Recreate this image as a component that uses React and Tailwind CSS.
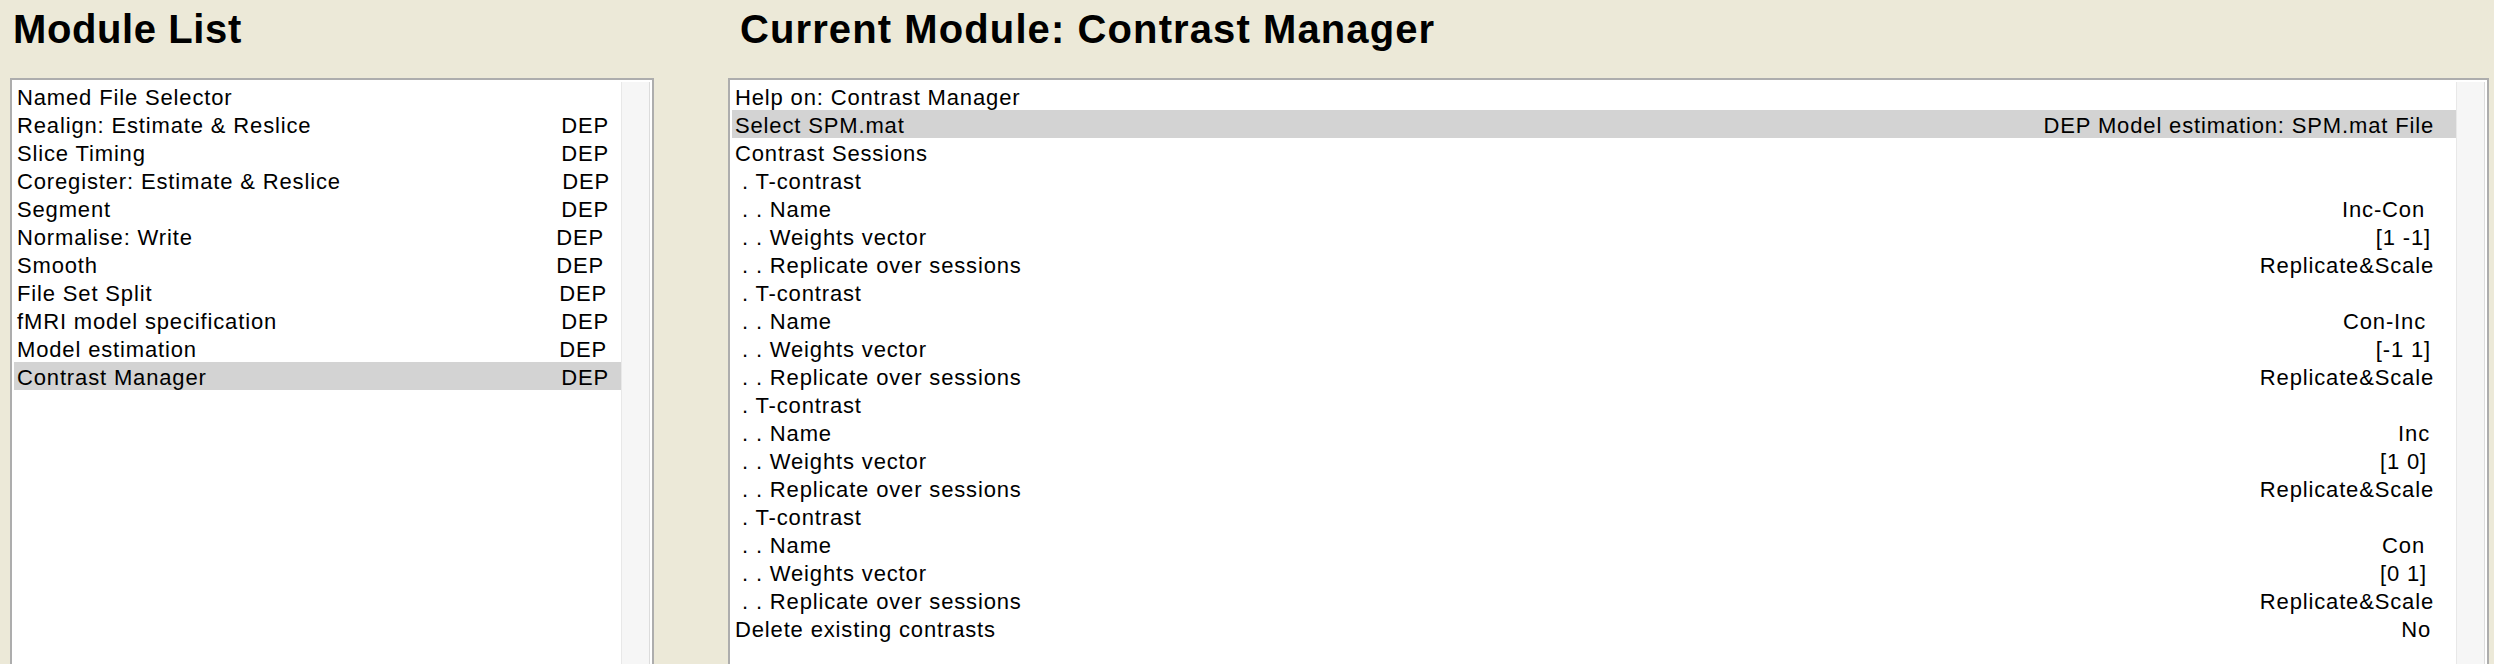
const MODULES = [
  { name: 'Named File Selector', dep: '', pr: 'pr-[12px]' },
  { name: 'Realign: Estimate & Reslice', dep: 'DEP', pr: 'pr-[12px]' },
  { name: 'Slice Timing', dep: 'DEP', pr: 'pr-[12px]' },
  { name: 'Coregister: Estimate & Reslice', dep: 'DEP', pr: 'pr-[11px]' },
  { name: 'Segment', dep: 'DEP', pr: 'pr-[12px]' },
  { name: 'Normalise: Write', dep: 'DEP', pr: 'pr-[17px]' },
  { name: 'Smooth', dep: 'DEP', pr: 'pr-[17px]' },
  { name: 'File Set Split', dep: 'DEP', pr: 'pr-[14px]' },
  { name: 'fMRI model specification', dep: 'DEP', pr: 'pr-[12px]' },
  { name: 'Model estimation', dep: 'DEP', pr: 'pr-[14px]' },
  { name: 'Contrast Manager', dep: 'DEP', pr: 'pr-[12px]', active: true },
]

const ITEMS = [
  { label: 'Help on: Contrast Manager', value: '', pr: 'pr-[22px]' },
  { label: 'Select SPM.mat', value: 'DEP Model estimation: SPM.mat File', pr: 'pr-[22px]', active: true },
  { label: 'Contrast Sessions', value: '', pr: 'pr-[22px]' },
  { label: ' . T-contrast', value: '', pr: 'pr-[22px]' },
  { label: ' . . Name', value: 'Inc-Con', pr: 'pr-[31px]' },
  { label: ' . . Weights vector', value: '[1 -1]', pr: 'pr-[25px]' },
  { label: ' . . Replicate over sessions', value: 'Replicate&Scale', pr: 'pr-[22px]' },
  { label: ' . T-contrast', value: '', pr: 'pr-[22px]' },
  { label: ' . . Name', value: 'Con-Inc', pr: 'pr-[30px]' },
  { label: ' . . Weights vector', value: '[-1 1]', pr: 'pr-[25px]' },
  { label: ' . . Replicate over sessions', value: 'Replicate&Scale', pr: 'pr-[22px]' },
  { label: ' . T-contrast', value: '', pr: 'pr-[22px]' },
  { label: ' . . Name', value: 'Inc', pr: 'pr-[26px]' },
  { label: ' . . Weights vector', value: '[1 0]', pr: 'pr-[29px]' },
  { label: ' . . Replicate over sessions', value: 'Replicate&Scale', pr: 'pr-[22px]' },
  { label: ' . T-contrast', value: '', pr: 'pr-[22px]' },
  { label: ' . . Name', value: 'Con', pr: 'pr-[31px]' },
  { label: ' . . Weights vector', value: '[0 1]', pr: 'pr-[29px]' },
  { label: ' . . Replicate over sessions', value: 'Replicate&Scale', pr: 'pr-[22px]' },
  { label: 'Delete existing contrasts', value: 'No', pr: 'pr-[25px]' },
]

function Row({ left, right, pr, active }) {
  return (
    <div className={`h-[28px] pt-[3px] pl-[3px] flex justify-between whitespace-pre leading-[25px] ${pr} ${active ? 'bg-[#d3d3d3]' : ''}`}>
      <span>{left}</span>
      <span>{right}</span>
    </div>
  )
}

function ListBox({ children }) {
  return (
    <div className="flex-1 bg-white border-2 border-b-0 border-[#adadad] flex">
      <div className="flex-1 pt-[2px] pl-[2px]">{children}</div>
      <div className="w-[29px] mt-[2px] mr-[2px] bg-[#f6f6f6] border-l border-[#e8e8e8] border-r border-r-[#dcdcdc]" />
    </div>
  )
}

export default function App() {
  return (
    <div
      className="h-[664px] overflow-hidden bg-[#ece9d8] flex text-black text-[22px] tracking-[0.85px]"
      style={{ fontFamily: '"Liberation Sans", Arial, sans-serif' }}
    >
      {/* Module list */}
      <div className="ml-[10px] w-[644px] flex flex-col">
        <h1 className="pt-[9px] pl-[3px] h-[78px] text-[40px] leading-[40px] font-bold tracking-[0.6px]">Module List</h1>
        <ListBox>
          {MODULES.map((m, i) => (
            <Row key={i} left={m.name} right={m.dep} pr={m.pr} active={m.active} />
          ))}
        </ListBox>
      </div>

      {/* Current module */}
      <div className="ml-[74px] w-[1761px] flex flex-col">
        <h1 className="pt-[9px] pl-[12px] h-[78px] text-[40px] leading-[40px] font-bold tracking-[1.1px]">Current Module: Contrast Manager</h1>
        <ListBox>
          {ITEMS.map((it, i) => (
            <Row key={i} left={it.label} right={it.value} pr={it.pr} active={it.active} />
          ))}
        </ListBox>
      </div>
    </div>
  )
}
